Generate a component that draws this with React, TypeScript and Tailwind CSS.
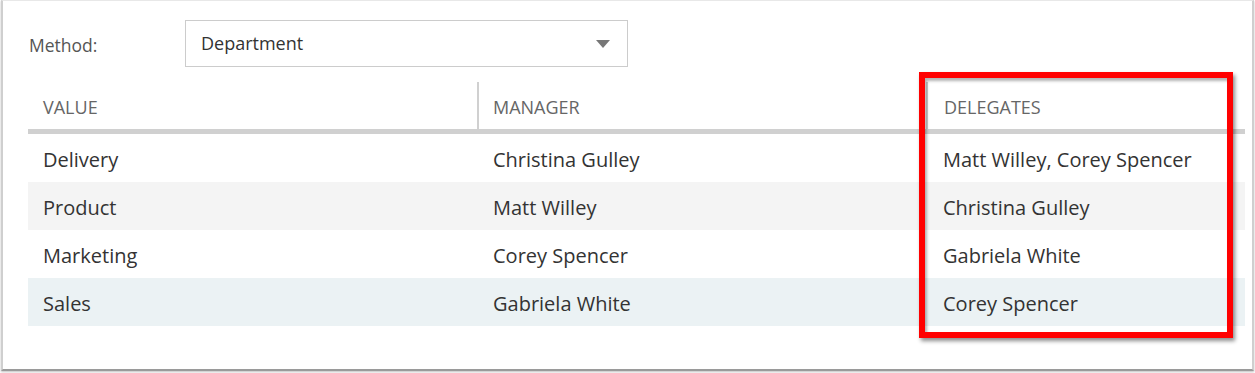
const rows = [
  { value: "Delivery", manager: "Christina Gulley", delegates: "Matt Willey, Corey Spencer", bg: "bg-white" },
  { value: "Product", manager: "Matt Willey", delegates: "Christina Gulley", bg: "bg-[#f4f4f4]" },
  { value: "Marketing", manager: "Corey Spencer", delegates: "Gabriela White", bg: "bg-white" },
  { value: "Sales", manager: "Gabriela White", delegates: "Corey Spencer", bg: "bg-[#ebf2f4]" },
];

const App = () => {
  return (
    <div className="relative w-[1255px] h-[373px] bg-white font-['Open_Sans',sans-serif]">
      <div className="ml-px w-[1253px] h-[371px] border-t border-t-[#e8e8e8] border-x-2 border-b-2 border-x-[#cfcfcf] border-b-[#9a9a9a] shadow-[0_1px_2px_rgba(0,0,0,0.25)]">
        <div className="pl-[25px] pr-[6px] pt-[19px]">
          {/* method picker */}
          <div className="flex items-center">
            <span className="w-[157px] pl-[1px] pt-[3px] text-[17.5px] text-[#555]">Method:</span>
            <div className="flex items-center justify-between w-[443px] h-[47px] border border-[#cccccc] pl-[15px] pr-[17px]">
              <span className="text-[18px] text-[#333]">Department</span>
              <svg width="14" height="8" viewBox="0 0 14 8">
                <path d="M0 0h14L7 8z" fill="#777" />
              </svg>
            </div>
          </div>

          {/* assignments table */}
          <div className="mt-[15px] w-[1217px]">
            <div className="grid grid-cols-[449px_449px_1fr] h-[52px] border-b-[5px] border-[#d0d0d0] text-[18px] text-[#666] uppercase">
              <div className="flex items-center pl-[15px] pt-[3px]">Value</div>
              <div className="flex items-center pl-[14px] pt-[3px] border-l-2 border-[#d0d0d0]">Manager</div>
              <div className="flex items-center pl-[16px] pt-[3px] border-l-2 border-[#d0d0d0]">Delegates</div>
            </div>
            {rows.map((r) => (
              <div key={r.value} className={`grid grid-cols-[449px_449px_1fr] h-[48px] text-[20px] text-[#333] ${r.bg}`}>
                <div className="flex items-center pl-[15px] pt-[3px]">{r.value}</div>
                <div className="flex items-center pl-[16px] pt-[3px]">{r.manager}</div>
                <div className="flex items-center pl-[17px] pt-[3px]">{r.delegates}</div>
              </div>
            ))}
          </div>
        </div>
      </div>

      {/* highlight around the delegates column */}
      <div className="absolute left-[919px] top-[72px] w-[314px] h-[266px] border-[6px] border-[#ff0000] shadow-[2px_3px_4px_rgba(0,0,0,0.45),inset_2px_3px_3px_rgba(0,0,0,0.3)]" />
    </div>
  );
};

export default App;
